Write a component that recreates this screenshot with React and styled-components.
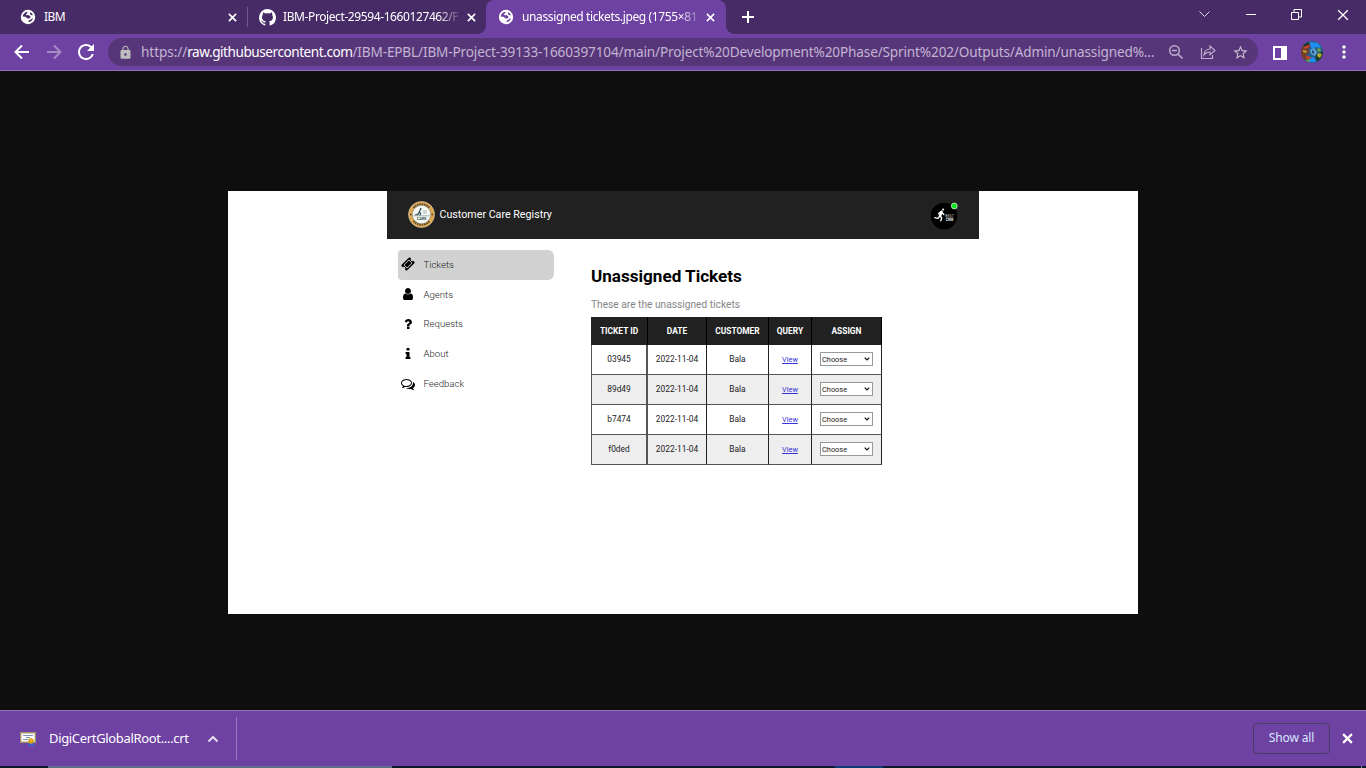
import React from "react";
import styled, { createGlobalStyle } from "styled-components";
import { MdLock, MdStarOutline, MdRefresh } from "react-icons/md";
import { VscGithubInverted } from "react-icons/vsc";

const GlobalStyle = createGlobalStyle`
  * { box-sizing: border-box; }
  body { margin: 0; overflow: hidden; background: #0e0e0e; }
  svg { display: block; flex: none; }
`;

const Browser = styled.div`
  width: 1366px;
  height: 768px;
  display: flex;
  flex-direction: column;
  overflow: hidden;
  font-family: "Noto Sans", "Open Sans", sans-serif;
  color: #fff;
`;

const TabStrip = styled.div`
  height: 34px;
  flex: none;
  display: flex;
  background: #472b66;
`;

const Tab = styled.div`
  width: ${(p) => p.$width}px;
  height: 34px;
  padding: 0 ${(p) => p.$right}px 0 ${(p) => p.$left}px;
  display: flex;
  align-items: center;
  position: relative;
  background: ${(p) => (p.$active ? "#6e42a2" : "transparent")};
  border-radius: 8px 8px 0 0;
  ${(p) =>
    p.$active &&
    `&::before, &::after {
      content: "";
      position: absolute;
      bottom: 0;
      width: 8px;
      height: 8px;
    }
    &::before { left: -8px; background: radial-gradient(circle at 0 0, transparent 7.5px, #6e42a2 8px); }
    &::after { right: -8px; background: radial-gradient(circle at 100% 0, transparent 7.5px, #6e42a2 8px); }`}
`;

const TabTitle = styled.span`
  flex: 1;
  min-width: 0;
  margin: 0 ${(p) => p.$gap}px 0 7px;
  white-space: nowrap;
  font-size: 12px;
  line-height: 18px;
  letter-spacing: ${(p) => p.$spacing || 0}px;
  ${(p) => p.$fade && "mask-image: linear-gradient(90deg, #000 calc(100% - 20px), transparent calc(100% + 4px));"}
`;

const TabDivider = styled.i`
  width: 1px;
  height: 20px;
  margin-top: 7px;
  background: #735694;
`;

const NewTab = styled.div`
  padding: 11px 0 0 16px;
`;

const WindowControls = styled.div`
  display: flex;
  align-items: center;
  gap: 34.6px;
  height: 29px;
  margin-left: auto;
  padding-right: 17px;
`;

const Toolbar = styled.div`
  height: 37px;
  flex: none;
  display: flex;
  align-items: center;
  background: #6e42a2;
  border-bottom: 1px solid #946fbd;
`;

const NavButtons = styled.div`
  display: flex;
  gap: 16px;
  width: 108px;
  padding-left: 14px;
`;

const AddressBar = styled.div`
  width: 1150px;
  height: 28px;
  border-radius: 14px;
  background: #563679;
  display: flex;
  align-items: center;
  padding: 0 9px 0 10px;
`;

const Url = styled.div`
  width: 1017px;
  margin-left: 8px;
  white-space: nowrap;
  font-size: 13.6px;
  line-height: 20px;
  color: #c3b4d3;
`;

const UrlPart = styled.span`
  color: ${(p) => (p.$strong ? "#fff" : "inherit")};
  letter-spacing: ${(p) => p.$spacing}px;
`;

const AddressActions = styled.div`
  display: flex;
  gap: 16px;
  margin-left: auto;
`;

const ToolbarActions = styled.div`
  display: flex;
  align-items: center;
  padding-left: 14px;
`;

const Viewer = styled.main`
  flex: 1;
  display: flex;
  justify-content: center;
  padding-top: 120px;
  background: #0e0e0e;
`;

const Sheet = styled.section`
  width: 910px;
  height: 423px;
  padding: 0 159px;
  background: #fff;
  font-family: Roboto, sans-serif;
  color: #000;
`;

const AppHeader = styled.header`
  width: 592px;
  height: 48px;
  display: flex;
  align-items: center;
  padding: 0 20px 1px 21px;
  background: #212121;
  color: #fff;
  font-size: 10.7px;
`;

const AppName = styled.span`
  flex: 1;
  padding: 0 0 0 4.5px;
`;

const AppBody = styled.div`
  display: flex;
`;

const SideNav = styled.nav`
  width: 204px;
  padding: 11px 0 0 11px;
`;

const NavItem = styled.div`
  width: 156px;
  height: 29.8px;
  display: flex;
  align-items: center;
  gap: 8.5px;
  padding: 0 0 1px 3px;
  border-radius: 4px 6px 6px 4px;
  background: ${(p) => (p.$active ? "#d2d2d2" : "transparent")};
  color: #1c1c1c;
  font-size: 9.6px;
  font-weight: 300;
`;

const Content = styled.div`
  padding-top: 27px;
`;

const Title = styled.h1`
  margin: 0;
  font-size: 17.1px;
  line-height: 21px;
  font-weight: 700;
`;

const Subtitle = styled.p`
  margin: 11px 0 0;
  height: 19px;
  font-size: 10.2px;
  line-height: 14px;
  color: #858585;
`;

const Table = styled.table`
  width: 291px;
  table-layout: fixed;
  border-spacing: 0;
  font-size: 8.4px;
  color: #222;
  text-align: center;
`;

const Th = styled.th`
  width: ${(p) => p.$width}px;
  height: 28px;
  padding: 0;
  background: #212121;
  color: #fff;
  font-size: 8.4px;
  font-weight: 700;
  border-right: 1px solid #000;
  white-space: nowrap;
`;

const Tr = styled.tr`
  background: ${(p) => (p.$striped ? "#eee" : "#fff")};
`;

const Td = styled.td`
  height: 30px;
  padding: 0 0 1px;
  border-right: ${(p) => (p.$double ? "2px solid #555" : "1px solid #222")};
  border-bottom: 1px solid #555;
  &:first-child { border-left: 1px solid #555; }
`;

const ViewLink = styled.a`
  color: #3434d8;
  font-size: 7.3px;
  text-decoration: underline;
`;

const Select = styled.div`
  width: 53px;
  height: 14px;
  margin: 0 auto;
  display: flex;
  align-items: center;
  justify-content: space-between;
  padding: 0 2px 0 1px;
  border: 1px solid #999;
  background: #fff;
  font-size: 7.4px;
`;

const Downloads = styled.footer`
  height: 56px;
  flex: none;
  display: flex;
  align-items: center;
  border-top: 1px solid #946fbd;
  background: #6e42a2;
`;

const DownloadItem = styled.div`
  width: 237px;
  height: 43px;
  display: flex;
  align-items: center;
  padding-left: 20px;
  border-right: 1px solid #9876bd;
  font-size: 13px;
`;

const FileName = styled.span`
  width: 159px;
  padding: 0 0 2px 13px;
  letter-spacing: -0.33px;
  white-space: nowrap;
`;

const ShowAll = styled.button`
  width: 77px;
  height: 31px;
  margin: 0 12px 0 auto;
  border: 1px solid #493c5d;
  border-radius: 4px;
  background: transparent;
  color: #d7e8ff;
  font: 12px "Noto Sans", sans-serif;
  letter-spacing: -0.15px;
  padding: 0 0 3px;
`;

const Taskbar = styled.div`
  height: 2px;
  flex: none;
  display: flex;
  background: #0b1a2c;
`;

const TaskSegment = styled.i`
  width: ${(p) => p.$width}px;
  margin-left: ${(p) => p.$gap}px;
  background: ${(p) => p.$color};
`;

const Cross = ({ size = 9, width = 1.8, color = "#fff" }) => (
  <svg width={size} height={size} viewBox="0 0 10 10" stroke={color} strokeWidth={width}>
    <path d="M1 1l8 8M9 1L1 9" />
  </svg>
);

const Globe = ({ hole }) => (
  <svg width="17" height="17" viewBox="0 0 17 17">
    <circle cx="8" cy="8" r="7.200" fill="#fff" />
    <path
      d="M2.700 7.500C3 5 4.700 3.200 7.300 2.700c.6 1-.2 1.600-1 2.200-.6.700-.3 1.400.6 1.500 1.500.1 3.400.3 3.500 1.800"
      fill={hole}
    />
    <path d="M6.500 6.200c1.800-.2 3.900.3 3.900 1.900 0 1.500-1.600 1.500-2.500 1.400L5.500 8zM10.300 3.200c1.200.6 2.200 1.500 2.600 2.900-.9.500-2 .3-2.500-.5-.5-.7-.7-1.500-.1-2.400zM13 9.200c-.4 1.900-1.900 3.500-4.300 3.900-.7-.8.1-1.700 1.300-2 .9-.3.700-1.500 3-1.900z" fill={hole} />
  </svg>
);

const Arrow = ({ color, flip }) => (
  <svg width="16" height="16" viewBox="0 0 16 16" fill="none" stroke={color} strokeWidth="2">
    <path d={flip ? "M1 8h13M8 1.500L14.500 8 8 14.500" : "M15 8H2M8 1.500L1.500 8 8 14.500"} />
  </svg>
);

const glyphs = {
  ticket:
    "M1024 452l316 316-572 572-316-316zm-211 979l618-618q19-19 19-45t-19-45l-362-362q-18-18-45-18t-45 18l-618 618q-19 19-19 45t19 45l362 362q18 18 45 18t45-18zm889-637l-907 908q-37 37-90.500 37t-90.500-37l-126-126q56-56 56-136t-56-136-136-56-136 56l-125-126q-37-37-37-90.500t37-90.500l907-906q37-37 90.500-37t90.500 37l125 125q-56 56-56 136t56 136 136 56 136-56l126 125q37 37 37 90.500t-37 90.500z",
  user:
    "M1536 1399q0 109-62.500 187t-150.500 78h-854q-88 0-150.500-78t-62.500-187q0-85 8.500-160.500t31.500-152 58.500-131 94-89 134.500-34.500q131 128 313 128t313-128q76 0 134.500 34.500t94 89 58.500 131 31.500 152 8.500 160.500zm-256-887q0 159-112.500 271.500t-271.500 112.500-271.500-112.500-112.500-271.500 112.500-271.500 271.500-112.500 271.500 112.500 112.500 271.500z",
  question:
    "M1088 1256v240q0 16-12 28t-28 12h-240q-16 0-28-12t-12-28v-240q0-16 12-28t28-12h240q16 0 28 12t12 28zm316-600q0 54-15.500 101t-35 76.500-55 59.500-57.500 43.500-61 35.500q-41 23-68.500 65t-27.500 67q0 17-12 32.500t-28 15.500h-240q-15 0-25.500-18.500t-10.500-37.500v-45q0-83 65-156.500t143-108.500q59-27 84-56t25-76q0-42-46.500-74t-107.500-32q-65 0-108 29-35 25-107 115-13 16-31 16-12 0-25-8l-164-125q-13-10-15.500-25t5.500-28q160-266 464-266 80 0 161 31t146 83 106 127.500 41 158.500z",
  info:
    "M1216 1344v128q0 26-19 45t-45 19h-512q-26 0-45-19t-19-45v-128q0-26 19-45t45-19h64v-384h-64q-26 0-45-19t-19-45v-128q0-26 19-45t45-19h384q26 0 45 19t19 45v576h64q26 0 45 19t19 45zm-128-1152v192q0 26-19 45t-45 19h-256q-26 0-45-19t-19-45v-192q0-26 19-45t45-19h256q26 0 45 19t19 45z",
  comments:
    "M704 384q-153 0-286 52t-211.500 141-78.500 191q0 82 53 158t149 132l97 56-35 84q34-20 62-39l44-31 53 10q78 14 153 14 153 0 286-52t211.500-141 78.500-191-78.500-191-211.500-141-286-52zm0-128q191 0 353.500 68.500t256.500 186.500 94 257-94 257-256.500 186.500-353.500 68.500q-86 0-176-16-124 88-278 128-36 9-86 16h-3q-11 0-20.500-8t-11.500-21q-1-3-1-6.500t.5-6.500 2-6l2.500-5 3.500-5.500 4-5 4.500-5 4-4.500q5-6 23-25t26-29.500 22.500-29 25-38.500 20.500-44q-124-72-195-177t-71-224q0-139 94-257t256.500-186.500 353.500-68.500zm822 1169q10 24 20.500 44t25 38.500 22.500 29 26 29.500 23 25q1 1 4 4.500t4.500 5 4 5 3.500 5.500l2.500 5 2 6 .5 6.500-1 6.500q-3 14-13 22t-22 7q-50-7-86-16-154-40-278-128-90 16-176 16-271 0-472-132 58 4 88 4 161 0 309-45t264-129q125-92 192-212t67-254q0-77-23-152 129 71 204 178t75 230q0 120-71 224.500t-195 176.500z",
};

const Glyph = ({ name }) => (
  <svg width="14" height="14" viewBox="0 0 1792 1792" fill="#000">
    <path d={glyphs[name]} />
  </svg>
);

const Crest = () => (
  <svg width="27" height="27" viewBox="0 0 27 27">
    <circle cx="13.500" cy="13.500" r="13" fill="#dda650" stroke="#dfd2b2" strokeWidth=".6" />
    <path d="M5.500 7a10.500 10.500 0 0 1 16 0M5.500 20a10.500 10.500 0 0 0 16 0" fill="none" stroke="#5a4827" strokeWidth="2.100" strokeDasharray="1.500 .8" />
    <circle cx="13.500" cy="13.500" r="9.200" fill="#f6f8f3" stroke="#68777a" strokeWidth=".5" />
    <g stroke="#294c54" fill="none" strokeLinecap="round">
      <path d="M12.500 8.200l-1.300 3.100 1.500 1.200-1 1.700M11 11.700l-1.500 2-2 .1" strokeWidth="1.200" />
      <path d="M12.800 7.600v.1" strokeWidth="1.500" />
    </g>
    <path d="M14.800 10h4.200M15.300 12h3.400M5.500 14.800h16" stroke="#8b9d9d" strokeWidth=".8" />
    <text x="13.500" y="19" textAnchor="middle" fontSize="3.800" fontWeight="700" fill="#36565b">CARE</text>
    <path d="M2 13.500h1.500M23.500 13.500H25" stroke="#443820" strokeWidth="1.300" />
  </svg>
);

const Profile = () => (
  <svg width="29" height="30" viewBox="0 0 29 30">
    <circle cx="14" cy="16" r="13.300" fill="#000" />
    <g stroke="#fff" fill="none" strokeLinecap="round" strokeLinejoin="round">
      <path d="M11.600 11.700L10 16" strokeWidth="2.500" />
      <path d="M10 16l1.700 1.800-.9 3M9.500 16.300l-1.500 2-3.300-.7M12 12.500l1.800 2M10.500 12l-2 1.800" strokeWidth="1.300" />
      <path d="M13.200 9.400v.1" strokeWidth="2" />
    </g>
    <text x="19.500" y="16.500" textAnchor="middle" fontSize="3.700" fill="#c6c6c6">BEST</text>
    <path d="M16 17.600h7" stroke="#777" strokeWidth=".7" />
    <text x="19.500" y="21" textAnchor="middle" fontSize="3.400" fontWeight="700" fill="#eee">CRM</text>
    <circle cx="24.300" cy="6" r="2.900" fill="#0de41a" stroke="#d4f3d5" strokeWidth=".8" />
  </svg>
);

const Avatar = () => (
  <svg width="22" height="22" viewBox="0 0 22 22">
    <defs>
      <clipPath id="avatar"><circle cx="11" cy="11" r="11" /></clipPath>
    </defs>
    <g clipPath="url(#avatar)">
      <path fill="#25608f" d="M0 0h22v22H0z" />
      <path fill="#783b2c" d="M0 5l8-3 4 3-5 3 2 3-4 3 5 3-3 3-7-3z" />
      <path fill="#1d8ff0" d="M9 1l8 1 3 5-5-1-4 2-2-3zM8 18l5-2 2 5H8z" />
      <path fill="#1c3a2e" d="M14 15l8-5v9l-6 2zM2 4l5-3 1 2-4 3z" />
      <path fill="#b8ab2e" d="M2 9l4 1-1 2-3-1zM17 12l4 1-2 4-3-2z" />
      <path fill="#d1452a" d="M3 6l4-2 1 2-4 2zM5 15l5 1-1 2-4-1z" />
      <path fill="#5ea5cc" d="M9 9l4-2 3 4-2 4-4-2z" />
      <path fill="#234b83" d="M11 9l2 1v3l-2-1z" />
      <path fill="#6c9e42" d="M17 7l3 1-1 3-3-1zM6 18l3 1-1 2-3-1z" />
    </g>
  </svg>
);

const Certificate = () => (
  <svg width="16" height="15" viewBox="0 0 16 15">
    <path d="M.7 1.700h14.600v9.500H.7z" fill="#fff" stroke="#a3946b" strokeWidth="1.400" />
    <path d="M3 4.500h10M3 8.500h5M6 6.500h4" stroke="#7d8fb0" />
    <path d="M9.500 11v4M12.500 11v4" stroke="#1976e8" strokeWidth="1.600" />
    <circle cx="11" cy="10" r="2.700" fill="#dc9b08" />
    <circle cx="11" cy="9.700" r="1" fill="#f6c63b" />
  </svg>
);

const navigation = [
  ["ticket", "Tickets"],
  ["user", "Agents"],
  ["question", "Requests"],
  ["info", "About"],
  ["comments", "Feedback"],
];

const columns = [
  ["TICKET ID", 57],
  ["DATE", 59],
  ["CUSTOMER", 62],
  ["QUERY", 43],
  ["ASSIGN", 70],
];

const tickets = ["03945", "89d49", "b7474", "f0ded"];

export default function App() {
  return (
    <Browser>
      <GlobalStyle />
      <TabStrip>
        <Tab $width={247} $left={20} $right={10.5}>
          <Globe hole="#472b66" />
          <TabTitle $gap={8} $spacing={-0.5}>IBM</TabTitle>
          <Cross />
        </Tab>
        <TabDivider />
        <Tab $width={238} $left={11} $right={10.5}>
          <VscGithubInverted size={17} />
          <TabTitle $gap={9} $fade $spacing={-0.4}>IBM-Project-29594-1660127462/P</TabTitle>
          <Cross />
        </Tab>
        <Tab $width={240} $left={12} $right={11.5} $active>
          <Globe hole="#6e42a2" />
          <TabTitle $gap={7} $fade $spacing={-0.38}>unassigned tickets.jpeg (1755×81</TabTitle>
          <Cross />
        </Tab>
        <NewTab>
          <svg width="12" height="12" stroke="#fff" strokeWidth="2"><path d="M6 0v12M0 6h12" /></svg>
        </NewTab>
        <WindowControls>
          <svg width="11" height="7" fill="none" stroke="#ddd"><path d="M.5.500l5 5 5-5" /></svg>
          <svg width="12" height="11" stroke="#fff"><path d="M1 5.500h10" /></svg>
          <svg width="11" height="11" fill="none" stroke="#fff"><path d="M.5 3.500h7v7h-7zM3 3V.500h7.500V8H8" /></svg>
          <Cross size={12} width={1.1} />
        </WindowControls>
      </TabStrip>

      <Toolbar>
        <NavButtons>
          <Arrow color="#fff" />
          <Arrow color="#a58bc4" flip />
          <svg width="16" height="16" viewBox="4 4 16 16" fill="#fff"><MdRefresh size={24} /></svg>
        </NavButtons>
        <AddressBar>
          <MdLock size={15} color="#bdbdbd" />
          <Url>
            <UrlPart $spacing={-0.08}>https://</UrlPart>
            <UrlPart $strong $spacing={-0.46}>raw.githubusercontent.com</UrlPart>
            <UrlPart $spacing={-0.155}>/IBM-EPBL/IBM-Project-39133-1660397104/main/Project%20Development%20Phase/Sprint%202/Outputs/Admin/unassigned%...</UrlPart>
          </Url>
          <AddressActions>
            <svg width="16" height="16" viewBox="0 0 16 16" fill="none" stroke="#bdaecb" strokeWidth="1.500">
              <circle cx="6.500" cy="6.500" r="4.800" /><path d="M10 10l4.500 4.500M4 6.500h5" />
            </svg>
            <svg width="16" height="16" viewBox="0 0 16 16" fill="none" stroke="#bdaecb" strokeWidth="1.200">
              <path d="M1.500 4v10.500h11V11M4 11c.3-4 2.500-6 6-6V2l5 4.500-5 4.300V8c-3 0-4.500 1-6 3z" />
            </svg>
            <MdStarOutline size={17} color="#c6bacf" />
          </AddressActions>
        </AddressBar>
        <ToolbarActions>
          <svg width="15" height="15"><path d="M2 2h12v12H2z" fill="none" stroke="#fff" strokeWidth="2" /><path d="M9 1h5v13H9z" fill="#fff" /></svg>
          <svg width="14" height="1" />
          <Avatar />
          <svg width="19" height="1" />
          <svg width="4" height="14" fill="#fff"><circle cx="2" cy="2" r="1.700" /><circle cx="2" cy="7" r="1.700" /><circle cx="2" cy="12" r="1.700" /></svg>
        </ToolbarActions>
      </Toolbar>

      <Viewer>
        <Sheet>
          <AppHeader>
            <Crest />
            <AppName>Customer Care Registry</AppName>
            <Profile />
          </AppHeader>
          <AppBody>
            <SideNav>
              {navigation.map(([icon, label], i) => (
                <NavItem key={label} $active={i === 0}>
                  <Glyph name={icon} />
                  {label}
                </NavItem>
              ))}
            </SideNav>
            <Content>
              <Title>Unassigned Tickets</Title>
              <Subtitle>These are the unassigned tickets</Subtitle>
              <Table>
                <thead>
                  <tr>
                    {columns.map(([label, width]) => <Th key={label} $width={width}>{label}</Th>)}
                  </tr>
                </thead>
                <tbody>
                  {tickets.map((id, i) => (
                    <Tr key={id} $striped={i % 2 === 1}>
                      <Td $double>{id}</Td>
                      <Td>2022-11-04</Td>
                      <Td>Bala</Td>
                      <Td><ViewLink>View</ViewLink></Td>
                      <Td>
                        <Select>
                          Choose
                          <svg width="6" height="4" fill="none" stroke="#111" strokeWidth="1.200"><path d="M.7.700L3 3 5.300.700" /></svg>
                        </Select>
                      </Td>
                    </Tr>
                  ))}
                </tbody>
              </Table>
            </Content>
          </AppBody>
        </Sheet>
      </Viewer>

      <Downloads>
        <DownloadItem>
          <Certificate />
          <FileName>DigiCertGlobalRoot....crt</FileName>
          <svg width="36" height="8" fill="none" stroke="#e6dcf0" strokeWidth="2"><path d="M13.500 6.500L18 2l4.500 4.500" /></svg>
        </DownloadItem>
        <ShowAll>Show all</ShowAll>
        <Cross size={11} width={2} />
        <svg width="13" height="1" />
      </Downloads>
      <Taskbar>
        <TaskSegment $width={344} $gap={48} $color="#5c6f88" />
        <TaskSegment $width={48} $gap={443} $color="#0c3c75" />
        <TaskSegment $width={1} $gap={478} $color="#7b8b99" />
      </Taskbar>
    </Browser>
  );
}
